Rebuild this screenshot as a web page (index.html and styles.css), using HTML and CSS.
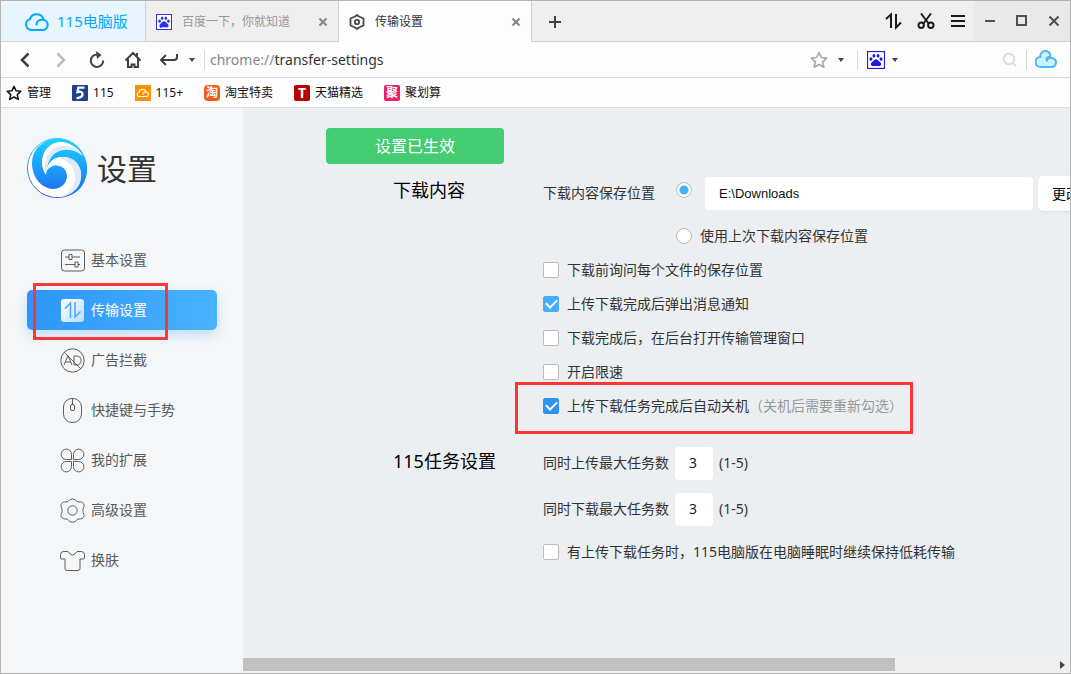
FILE: index.html
```html
<!DOCTYPE html>
<html lang="zh-CN">
<head>
<meta charset="utf-8">
<title>传输设置</title>
<link rel="stylesheet" href="styles.css">
</head>
<body>
<svg class="defs" aria-hidden="true">
  <symbol id="paw" viewBox="0 0 18 18">
    <rect x=".5" y=".5" width="17" height="17" fill="#fff" stroke="currentColor" stroke-width="1.200"/>
    <g fill="currentColor" transform="translate(.9 .9) scale(.9)">
      <ellipse cx="3.400" cy="8" rx="1.700" ry="2"/>
      <ellipse cx="6.700" cy="4.300" rx="1.600" ry="2.100"/>
      <ellipse cx="11.300" cy="4.300" rx="1.600" ry="2.100"/>
      <ellipse cx="14.600" cy="8" rx="1.700" ry="2"/>
      <path d="M9 8.200c2 0 2.600 1.800 4 2.800 1.600 1.200 2 2.100 1.600 3.400-.4 1.400-2 1.600-3.500 1.300-1.400-.2-2.800-.2-4.200 0-1.500.3-3.100.1-3.500-1.300-.4-1.300 0-2.200 1.600-3.400C6.400 10 7 8.200 9 8.200z"/>
    </g>
  </symbol>
  <symbol id="star" viewBox="0 0 18 18">
    <path d="M9 1.500l2.300 5 5.400.6-4 3.700 1.100 5.400L9 13.500l-4.800 2.700 1.100-5.400-4-3.700 5.400-.6z" fill="none" stroke="currentColor" stroke-width="1.700" stroke-linejoin="round"/>
  </symbol>
  <symbol id="cloud" viewBox="0 0 26 22">
    <path d="M7 20h12a5 5 0 0 0 1.500-9.800A7.500 7.500 0 0 0 6 9a5.600 5.600 0 0 0 1 11z" stroke="none"/>
    <path d="M12.500 14.500c0-3 2.500-4.800 5-4.800a5.200 5.200 0 0 1 2 10.300H7A5.600 5.600 0 0 1 6 9.100a7 7 0 0 1 13.500.9" fill="none" stroke="currentColor" stroke-width="2" stroke-linecap="round"/>
  </symbol>
  <symbol id="cloud-round" viewBox="0 0 22 19">
    <path d="M11.500 9.500q0-2 2-2.500 2.500.5 1.500-3A5 5 0 0 0 5.500 7 5 5 0 0 0 5.500 17H16a4.500 4.500 0 0 0 1-9q-2-.5-3.500.500-1.500 1-1.500 2.500" stroke="currentColor" stroke-width="2" stroke-linecap="round" stroke-linejoin="round"/>
  </symbol>
</svg>
<div class="window">
  <header class="titlebar">
    <button class="brand" type="button">
      <svg class="brand-cloud" viewBox="0 0 26 22" fill="none"><use href="#cloud"/></svg>
      <span>115电脑版</span>
    </button>
    <div class="tab">
      <svg class="icon16 paw-tab" viewBox="0 0 18 18"><use href="#paw"/></svg>
      <span class="tab-title">百度一下，你就知道</span>
      <button class="tab-close" type="button" aria-label="关闭"><svg viewBox="0 0 10 10"><path d="M1.500 1.500l7 7m0-7l-7 7"/></svg></button>
    </div>
    <div class="tab tab-active">
      <svg class="icon16" viewBox="0 0 16 16" fill="none" stroke="#46474c" stroke-width="1.800"><path d="M8 1l2 1.500 4.500 2V11.500l-4.500 2L8 15l-2-1.500-4.500-2v-7l4.500-2z" stroke-linejoin="round"/><circle cx="8" cy="8" r="2.200"/></svg>
      <span class="tab-title">传输设置</span>
      <button class="tab-close" type="button" aria-label="关闭"><svg viewBox="0 0 10 10"><path d="M1.500 1.500l7 7m0-7l-7 7"/></svg></button>
    </div>
    <button class="new-tab" type="button" aria-label="新标签页"><svg viewBox="0 0 12 12"><path d="M6 0v12M0 6h12"/></svg></button>
    <div class="tools">
      <button class="tool" type="button" aria-label="传输"><svg viewBox="0 0 18 18"><path d="M1 7l5-4.500V16M11 2v13.500l5-5" stroke-width="2"/></svg></button>
      <button class="tool" type="button" aria-label="截图"><svg viewBox="0 0 18 18"><path d="M4 1.500l8 10.500M14 1.500L6 12"/><circle cx="4.200" cy="13.300" r="2.700"/><circle cx="13.800" cy="13.300" r="2.700"/></svg></button>
      <button class="tool" type="button" aria-label="菜单"><svg viewBox="0 0 18 18"><path d="M2 4h14M2 9h14M2 14h14"/></svg></button>
    </div>
    <div class="tools window-tools">
      <button class="tool" type="button" aria-label="最小化"><svg viewBox="0 0 18 18"><path d="M4 9h10"/></svg></button>
      <button class="tool" type="button" aria-label="最大化"><svg viewBox="0 0 18 18"><path d="M4 4h9v9H4z"/></svg></button>
      <button class="tool" type="button" aria-label="关闭窗口"><svg viewBox="0 0 18 18"><path d="M4.500 4.500l9 9m0-9l-9 9"/></svg></button>
    </div>
  </header>

  <div class="toolbar">
    <button class="nav-btn" type="button" aria-label="后退"><svg viewBox="0 0 18 18"><path d="M12.500 2.500L6 9l6.500 6.500" stroke-width="2.500"/></svg></button>
    <button class="nav-btn nav-off" type="button" aria-label="前进"><svg viewBox="0 0 18 18"><path d="M5.500 2.500L12 9l-6.500 6.500" stroke-width="2.500"/></svg></button>
    <button class="nav-btn" type="button" aria-label="刷新"><svg viewBox="0 0 18 18"><path d="M9.500 3.500A6.200 6.200 0 1 0 15.200 9.500M8.500 3.500h1.500"/><path d="M8 0l5.500 4L9 8z" fill="#3f4045" stroke="none"/></svg></button>
    <button class="nav-btn" type="button" aria-label="主页"><svg viewBox="0 0 18 18"><path d="M1.500 9.500L9 2l7.500 7.500M4 8v8h3.500v-2.500h3V16H14V8M13 2v3"/></svg></button>
    <button class="nav-btn" type="button" aria-label="恢复"><svg viewBox="0 0 18 18"><path d="M17 3v3q0 3-3 3H1M6 4L1 9l5 5"/></svg></button>
    <button class="caret" type="button" aria-label="历史"></button>
    <i class="rule rule-left"></i>
    <div class="address"><span class="scheme">chrome://</span>transfer-settings</div>
    <button class="star-btn" type="button" aria-label="收藏"><svg viewBox="0 0 18 18"><use href="#star"/></svg></button>
    <button class="caret" type="button" aria-label="收藏菜单"></button>
    <i class="rule"></i>
    <svg class="paw-bar" viewBox="0 0 18 18"><use href="#paw"/></svg>
    <button class="caret caret-engine" type="button" aria-label="搜索引擎"></button>
    <button class="search-btn" type="button" aria-label="搜索"><svg viewBox="0 0 16 16"><circle cx="7" cy="7" r="5.300"/><path d="M11 11l3 3"/></svg></button>
    <i class="rule"></i>
    <svg class="cloud-bar" viewBox="0 0 22 19" fill="#c5f5ff"><use href="#cloud-round"/></svg>
  </div>

  <nav class="bookmarks">
    <a href="#"><svg class="icon16" viewBox="0 0 18 18"><use href="#star"/></svg>管理</a>
    <a href="#"><svg class="icon16" viewBox="0 0 16 16"><rect width="16" height="16" rx="1" fill="#1f448c"/><path d="M12.500 2.600H6.400L5.500 7q5-1 5 2.200 0 3.300-6 4" fill="none" stroke="#fff" stroke-width="2.300"/></svg>115</a>
    <a href="#"><svg class="icon16" viewBox="0 0 16 16"><rect width="16" height="16" fill="#ff9100"/><path d="M8 9.500c0-2 2-3 3.500-2.300 2.800.6 2.300 4.300-.3 4.300H4.500C1.500 11.500 1.500 8 4 7.500 4.500 3.500 10 3.500 11 7" fill="none" stroke="#fff" stroke-width="1.200"/></svg>115+</a>
    <a href="#"><span class="badge badge-tao">淘</span>淘宝特卖</a>
    <a href="#"><span class="badge badge-tmall">T</span>天猫精选</a>
    <a href="#"><span class="badge badge-ju">聚</span>聚划算</a>
  </nav>

  <div class="content">
    <aside class="sidebar">
      <div class="heading">
        <svg class="logo" viewBox="0 0 60 60">
          <defs>
            <linearGradient id="wave" x1="0" y1="0" x2="0" y2="1"><stop offset="0" stop-color="#1bd3ff"/><stop offset="1" stop-color="#1f68f2"/></linearGradient>
            <linearGradient id="rim" x1="0" y1="0" x2="0" y2="1"><stop offset="0" stop-color="#35c8ff"/><stop offset="1" stop-color="#2456e8"/></linearGradient>
          </defs>
          <circle cx="30" cy="30" r="29.500" fill="#fff" stroke="url(#rim)"/>
          <path d="M10 10C18 2 26 0 33 .5 45 2 53 9 56 17 49 9 43 5 36 4 22 3 15 14 15 25q0 6 4 12C20 22 28 19 36 19 46 20 53 29 52 40 50 51 42 57 32 59.500 50 59 60 46 60 31q0-8-4-14C49 9 42 10 37 10c-10 1-16 9-18 22 5-7 9-5 14-4 6 2 8 8 7 13-2 7-8 11-14 10C13 50 5 38 5 25c0-6 2-11 5-15z" fill="url(#wave)"/>
          <path d="M16 28C15 15 22 5 34 5c10 0 17 5 22 13C48 11 39 10 32 13 23 16 20 26 19 36q-3-3-3-8z" fill="#fff"/>
          <path d="M18 31C17 17 24 9 34 8c8-1 15 2 21 9-8-6-16-7-23-4-9 3-12 13-13 22z" fill="#deebf6"/>
          <path d="M19 34c2-10 8-14 16-15 12-1 20 9 19 20-1 11-10 19-21 20C20 60 8 50 5 37c5 11 13 15 21 14 8 0 14-6 14-13 0-12-15-15-21-4z" fill="#fff"/>
          <path d="M31 20c15-4 25 8 23 20-1 10-9 17-20 19 11-5 15-13 14-21-1-10-7-16-17-18z" fill="#deebf6"/>
        </svg>
        <h1>设置</h1>
      </div>
      <nav class="menu">
        <a href="#"><svg viewBox="0 0 25 25"><rect x="1.500" y="2" width="23" height="21" rx="3"/><path d="M5 9h4m3 0h8M5 16.500h10m3 0h2M9 6.500h3v5H9zM15 14h3v5h-3z"/></svg>基本设置</a>
        <a class="current" href="#"><svg viewBox="0 0 25 25"><defs><linearGradient id="tile" x1="0" y1="0" x2="1" y2="1"><stop offset="0" stop-color="#fff"/><stop offset="1" stop-color="#b9defe"/></linearGradient></defs><rect x="1" y="1" width="23" height="23" rx="3" fill="url(#tile)" stroke="none"/><path d="M5 10.500L10.500 5v15M15 4v15l5.500-5.500" stroke="#4aa5fb" stroke-width="1.500"/></svg>传输设置<i class="mark mark-menu"></i></a>
        <a href="#"><svg viewBox="0 0 25 25"><circle cx="12.500" cy="12.500" r="11.700"/><path d="M4 17l4-9.500L12 17M5.500 14h5.500M14 8v9M14 8h2.500q4.500 0 4.500 4.500T16.500 17H14M4 4l17 17"/></svg>广告拦截</a>
        <a href="#"><svg viewBox="0 0 25 25"><rect x="3.500" y=".5" width="18" height="24" rx="8.500"/><path d="M12.500 1v5"/><rect x="10.500" y="6.500" width="4" height="6" rx="1.500"/></svg>快捷键与手势</a>
        <a href="#"><svg viewBox="0 0 25 25"><path d="M11.500 11.500H6.500a5.200 5.200 0 1 1 5-5zM13.500 11.500h5a5.200 5.200 0 1 0-5-5zM11.500 13.500H6.500a5.200 5.200 0 1 0 5 5zM13.500 13.500h5a5.200 5.200 0 1 1-5 5z"/></svg>我的扩展</a>
        <a href="#"><svg viewBox="0 0 25 25"><path d="M9.500 2q3-2.500 6 0 1 2 3.500 2c4-.5 5.500 2 5 4.500-1.500 2.500-1.500 5.500 0 8 .5 2.500-1 4.500-5 4.500-2.500 0-2.500 1.500-3.500 2.500q-3 1.500-6 0C8.500 22.500 8.500 21 6 21c-4 0-5.500-2-5-4.500 1.500-2.500 1.500-5.500 0-8C.5 6 2 3.500 6 4q2.500 0 3.500-2z"/><circle cx="12.500" cy="12.500" r="4.700"/></svg>高级设置</a>
        <a href="#"><svg viewBox="0 0 25 25"><path d="M8 3.500H3.500q-2.500 0-3 3V10q0 1 1.500 1h3v9.500q0 2 2 2h11q2 0 2-2V11h3q1.500 0 1.500-1V6.500q-.5-3-3-3H17q-2 3.500-4.500 3.500T8 3.500z"/></svg>换肤</a>
      </nav>
    </aside>

    <main class="pane">
      <div class="page">
        <div class="notice" role="status">设置已生效</div>
        <section class="group">
          <h2>下载内容</h2>
          <div class="fields">
            <div class="field path-field">
              <span class="caption">下载内容保存位置</span>
              <input class="radio" type="radio" name="place" checked aria-label="指定位置">
              <input class="path" type="text" value="E:\Downloads" aria-label="下载内容保存位置">
              <button class="change" type="button">更改</button>
            </div>
            <label class="field last-place"><input class="radio" type="radio" name="place">使用上次下载内容保存位置</label>
            <label class="field"><input class="check" type="checkbox">下载前询问每个文件的保存位置</label>
            <label class="field"><input class="check" type="checkbox" checked>上传下载完成后弹出消息通知</label>
            <label class="field"><input class="check" type="checkbox">下载完成后，在后台打开传输管理窗口</label>
            <label class="field"><input class="check" type="checkbox">开启限速</label>
            <label class="field"><input class="check check-deep" type="checkbox" checked>上传下载任务完成后自动关机<span class="hint">（关机后需要重新勾选）</span><i class="mark mark-field"></i></label>
          </div>
        </section>
        <section class="group group-tasks">
          <h2>115任务设置</h2>
          <div class="fields">
            <div class="number"><label for="up">同时上传最大任务数</label><input id="up" type="text" value="3"><span>(1-5)</span></div>
            <div class="number"><label for="down">同时下载最大任务数</label><input id="down" type="text" value="3"><span>(1-5)</span></div>
            <label class="field sleep"><input class="check" type="checkbox">有上传下载任务时，115电脑版在电脑睡眠时继续保持低耗传输</label>
          </div>
        </section>
      </div>
      <div class="scrollbar"><div class="track"><div class="thumb"></div></div><i class="scroll-arrow"></i></div>
    </main>
  </div>
</div>
</body>
</html>
```

FILE: styles.css
```css
* { box-sizing: border-box; }
body {
  margin: 0;
  font-family: "Noto Sans", "Noto Sans CJK SC", sans-serif;
  font-size: 14px;
  line-height: 20px;
  color: #333;
}
button, input { font: inherit; margin: 0; padding: 0; }
button { border: 0; background: none; color: inherit; }
a { color: inherit; text-decoration: none; }
svg { display: block; flex: none; }
.defs { position: absolute; width: 0; height: 0; }
.icon16 { width: 16px; height: 16px; }

.window {
  display: flex;
  flex-direction: column;
  height: 100vh;
  border: 1px solid #b3b3b3;
  overflow: hidden;
  background: #fdfdfd;
}

/* Title bar */
.titlebar { display: flex; flex: none; height: 41px; background: #efefef; box-shadow: inset 0 -1px #d0d0d0; }
.brand {
  display: flex; align-items: center; gap: 7px;
  width: 145px; padding-left: 23px;
  font-size: 15px; color: #00a9ff;
  background: #e7f5ff;
  border-right: 1px solid #d0d0d0; border-bottom: 1px solid #d0d0d0;
}
.brand-cloud { width: 26px; height: 22px; }
.tab {
  display: flex; align-items: center; gap: 10px;
  width: 193px; padding: 0 9px 0 10px;
  font-size: 12px; color: #999;
  border-right: 1px solid #d0d0d0;
}
.tab-active { background: #fdfdfd; color: #333; }
.paw-tab { color: #2a32e4; }
.tab-title { flex: 1; white-space: nowrap; }
.tab-close { display: grid; place-items: center; width: 12px; height: 20px; }
.tab-close svg { width: 10px; height: 10px; fill: none; stroke: #858585; stroke-width: 2; }
.new-tab { display: grid; place-items: center; width: 46px; }
.new-tab svg { width: 12px; height: 12px; stroke: #404040; stroke-width: 2; }
.tools { display: flex; margin-bottom: 1px; }
.new-tab + .tools { margin-left: auto; }
.tool { display: grid; place-items: center; width: 32px; }
.tool svg { width: 18px; height: 18px; fill: none; stroke: #1b1b1b; stroke-width: 2; }
.window-tools { background: #e9e9e9; }
.window-tools svg { stroke: #505050; }

/* Address bar */
.toolbar {
  display: flex; align-items: center; flex: none;
  height: 36px; padding: 0 13px 0 6px;
  border-bottom: 1px solid #dcdcdc;
}
.nav-btn { display: grid; place-items: center; width: 36px; height: 34px; }
.nav-btn svg { width: 18px; height: 18px; fill: none; stroke: #3f4045; stroke-width: 2; }
.nav-off svg { stroke: #bbb; }
.caret { width: 9px; height: 20px; display: grid; place-items: center; }
.caret::before { content: ""; border: 3px solid transparent; border-top: 4px solid #444; border-bottom: 0; }
.rule { width: 1px; height: 20px; background: #d8d8d8; }
.rule-left { margin-left: 8px; }
.address { flex: 1; margin-left: 5px; font-size: 14px; color: #333; }
.scheme { color: #888; }
.star-btn { color: #aaa; margin-right: 8px; }
.star-btn svg { width: 18px; height: 18px; }
.star-btn + .caret { margin-right: 12px; }
.paw-bar { width: 18px; height: 18px; margin-left: 9px; color: #2318db; }
.caret-engine { margin-left: 5px; }
.search-btn { margin: 0 8px 0 103px; }
.search-btn svg { width: 16px; height: 16px; fill: none; stroke: #ddd; stroke-width: 2; }
.cloud-bar { width: 22px; height: 19px; margin-left: 8px; color: #50b4ff; }

/* Bookmarks */
.bookmarks {
  display: flex; align-items: center; gap: 21px; flex: none;
  height: 30px; padding: 1px 0 0 5px;
  border-bottom: 1px solid #dcdcdc;
  font-size: 12px; color: #111;
}
.bookmarks a { display: flex; align-items: center; gap: 5px; }
.badge {
  width: 16px; height: 16px; border-radius: 2px;
  font-size: 12px; line-height: 15px; font-weight: bold;
  text-align: center; color: #fff;
}
.badge-tao { background: #f45a1f; border-radius: 4px; }
.badge-tmall { background: #b90000; font-size: 14px; }
.badge-ju { background: #e91e63; }

/* Layout */
.content { display: flex; flex: 1; min-height: 0; }
.sidebar { flex: none; width: 242px; padding: 30px 26px; background: #f4f6f8; }
.pane { display: flex; flex-direction: column; flex: 1; min-width: 0; background: #ebeff2; }

.heading { display: flex; align-items: center; gap: 10px; }
.logo { width: 60px; height: 60px; }
.heading h1 { margin: 0; padding-top: 2px; font-size: 30px; line-height: 58px; font-weight: normal; }
.menu { display: flex; flex-direction: column; gap: 10px; margin-top: 42px; color: #5a5a5a; }
.menu a {
  position: relative;
  display: flex; align-items: center; gap: 6px;
  height: 40px; padding-left: 33px; border-radius: 5px;
}
.menu svg { width: 25px; height: 25px; fill: none; stroke: #5d5d5d; }
.menu .current {
  color: #fff;
  background: linear-gradient(100deg, #2d95fa, #48b3ff);
  box-shadow: 0 5px 12px #c4dcf5;
}

/* Highlight frames laid over the page */
.mark { position: absolute; border: 3px solid #fa3735; pointer-events: none; }
.mark-menu { left: 6px; top: -7px; width: 135px; height: 57px; }
.mark-field { left: -28px; top: -7px; width: 398px; height: 52px; }

/* Settings */
.page { flex: 1; min-height: 0; padding: 20px 0 0 83px; overflow: hidden; white-space: nowrap; }
.notice {
  width: 178px; height: 36px; border-radius: 4px;
  background: #43cc72; color: #fff;
  font-size: 16px; line-height: 36px; text-align: center;
}
.group { display: grid; grid-template-columns: 150px 1fr; padding-left: 67px; margin-top: 12px; }
.group-tasks { margin-top: 24px; }
.group h2 { margin: 0; font-size: 18px; line-height: 28px; font-weight: normal; color: #000; }
.field { position: relative; display: flex; align-items: center; height: 34px; width: max-content; }
.path-field { height: 35px; }
.caption { width: 133px; padding-bottom: 2px; }
.last-place { margin-top: 8px; padding-left: 133px; }
.radio, .check { appearance: none; flex: none; width: 16px; height: 16px; border: 1px solid #bbb; background: #fff; }
.radio { border-radius: 50%; margin-right: 8px; }
.radio:checked { background: radial-gradient(circle, #45b0fc 4px, #fff 5px); }
.path-field .radio { margin: 0 13px 7px 0; }
.path { width: 328px; height: 33px; padding: 0 14px; border: 0; border-radius: 4px; background: #fff; font-family: "Liberation Sans", sans-serif; font-size: 13px; color: #111; }
.change { height: 35px; margin-left: 5px; padding: 0 14px; border-radius: 5px; background: #fff; color: #000; box-shadow: 0 1px 2px #d8dde2; }
.check { border-radius: 2px; margin-right: 8px; }
.check:checked { display: grid; place-items: center; border-color: #45aefc; background: #45aefc; }
.check:checked::before { content: ""; width: 9px; height: 5px; margin-bottom: 3px; border: solid #fff; border-width: 0 0 2px 2px; transform: rotate(-45deg); }
.check-deep:checked { border-color: #2d94f6; background: #2d94f6; }
.hint { color: #999; }
.number { display: flex; align-items: center; gap: 6px; margin-bottom: 13px; }
.number label, .number span { padding-bottom: 2px; }
.number input { width: 38px; height: 33px; padding: 0 2px 2px 0; border: 0; border-radius: 4px; background: #fff; text-align: center; color: #222; }
.sleep { height: 26px; }

/* Horizontal scrollbar */
.scrollbar { display: flex; align-items: center; flex: none; height: 17px; padding-right: 5px; background: #f0f0f0; }
.track { flex: 1; margin-right: 12px; }
.thumb { width: 81%; height: 13px; background: #c1c1c1; }
.scroll-arrow { border: 4px solid transparent; border-left: 5px solid #444; border-right: 0; }
```
